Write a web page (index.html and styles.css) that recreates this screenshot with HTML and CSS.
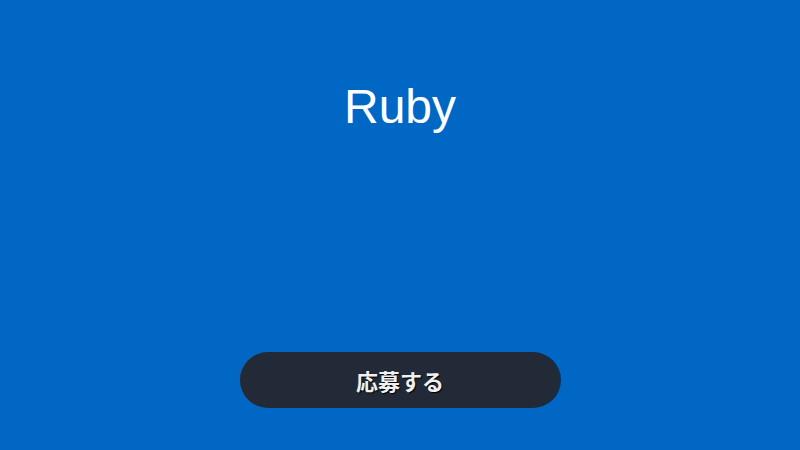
FILE: index.html
```html
<!DOCTYPE html>
<html lang="ja">
<head>
<meta charset="utf-8">
<link rel="stylesheet" href="styles.css">
</head>
<body>
<main class="screen">
  <h1 class="title">Ruby</h1>
  <button class="apply">応募する</button>
</main>
</body>
</html>
```

FILE: styles.css
```css
html, body {
  margin: 0;
  padding: 0;
}
body {
  background: #0067c5;
  font-family: "Liberation Sans", Arial, "Noto Sans CJK JP", sans-serif;
}
.screen {
  height: 450px;
  box-sizing: border-box;
  display: flex;
  flex-direction: column;
  align-items: center;
  padding: 80px 0 42px;
}
.title {
  margin: 0;
  font-size: 48px;
  line-height: 54px;
  font-weight: normal;
  color: #ffffff;
}
.apply {
  margin-top: auto;
  width: 321px;
  height: 56px;
  border: none;
  border-radius: 28px;
  background: #212a36;
  color: #f0f0f0;
  font-family: "Noto Sans CJK JP", sans-serif;
  font-size: 22px;
  font-weight: bold;
  text-shadow: 1px 1px 1px #000;
  padding: 0;
}
```
